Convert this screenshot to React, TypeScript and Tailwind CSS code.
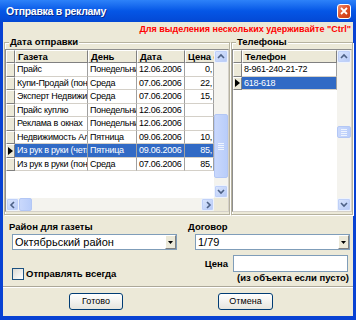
import React from "react";

const rows: [string, string, string, string][] = [
  ["Прайс", "Понедельник", "12.06.2006", "0,"],
  ["Купи-Продай (понедельник)", "Среда", "07.06.2006", "22,"],
  ["Эксперт Недвижимость", "Среда", "07.06.2006", "15,"],
  ["Прайс куплю", "Понедельник", "12.06.2006", ""],
  ["Реклама в окнах", "Понедельник", "12.06.2006", ""],
  ["Недвижимость Алтая", "Пятница", "09.06.2006", "10,"],
  ["Из рук в руки (четверг)", "Пятница", "09.06.2006", "85,"],
  ["Из рук в руки (понедельник)", "Среда", "07.06.2006", "85,"],
];

function Chevron({ dir }: { dir: "up" | "down" | "left" | "right" }) {
  const d =
    dir === "up"
      ? "M1 5 L4 2 L7 5"
      : dir === "down"
      ? "M1 2 L4 5 L7 2"
      : dir === "left"
      ? "M5 1 L2 4 L5 7"
      : "M3 1 L6 4 L3 7";
  return (
    <svg width="8" height="8" viewBox="0 0 8 8">
      <path d={d} fill="none" stroke="#4D6185" strokeWidth="1.6" />
    </svg>
  );
}

function ArrowBtn({ dir }: { dir: "up" | "down" | "left" | "right" }) {
  return (
    <div className="w-full h-full rounded-[2px] border border-[#EEF3FD] bg-gradient-to-br from-[#DCE7FD] to-[#B4C8F6] flex items-center justify-center shadow-[inset_0_0_0_1px_#BFD0F8]">
      <Chevron dir={dir} />
    </div>
  );
}

function Thumb({ grip }: { grip?: boolean }) {
  return (
    <div className="w-full h-full rounded-[2px] border border-[#B3C7F5] bg-gradient-to-r from-[#C9D8FC] to-[#B9CDFA] flex items-center justify-center">
      {grip && (
        <div className="flex flex-col gap-[1px]">
          <div className="w-[6px] h-[1px] bg-[#EEF4FE]" />
          <div className="w-[6px] h-[1px] bg-[#EEF4FE]" />
          <div className="w-[6px] h-[1px] bg-[#EEF4FE]" />
          <div className="w-[6px] h-[1px] bg-[#EEF4FE]" />
        </div>
      )}
    </div>
  );
}

function Indicator({ active }: { active?: boolean }) {
  return (
    <div className="w-[9px] h-full shrink-0 bg-[#ECE9D8] border-t border-l border-t-white border-l-white border-r border-b border-r-[#808080] border-b-[#808080] flex items-center justify-center">
      {active && (
        <svg width="5" height="8" viewBox="0 0 5 8">
          <path d="M0 0 L5 4 L0 8 Z" fill="#000" />
        </svg>
      )}
    </div>
  );
}

function HeaderCell({ w, children }: { w: string; children?: React.ReactNode }) {
  return (
    <div
      className={`${w} h-full shrink-0 bg-[#ECE9D8] border-t border-l border-t-white border-l-white border-r border-b border-r-[#808080] border-b-[#808080] px-[2px] font-bold text-[9.5px] tracking-[-0.1px] leading-[12px] whitespace-nowrap overflow-hidden`}
    >
      {children}
    </div>
  );
}

function Cell({
  w,
  sel,
  right,
  children,
}: {
  w: string;
  sel?: boolean;
  right?: boolean;
  children?: React.ReactNode;
}) {
  return (
    <div
      className={`${w} h-full shrink-0 border-r border-b border-r-[#A0A0A0] border-b-[#D4D0C8] px-[2px] text-[9px] tracking-[-0.25px] leading-[13px] whitespace-nowrap overflow-hidden ${
        sel ? "bg-[#316AC5] text-white" : "bg-white text-black"
      } ${right ? "text-right pr-[1px]" : ""}`}
    >
      {children}
    </div>
  );
}

function GroupBox({
  label,
  className,
  children,
}: {
  label: string;
  className: string;
  children: React.ReactNode;
}) {
  return (
    <div
      className={`relative border border-[#B6B29F] shadow-[inset_1px_1px_0_#FFFFFF,1px_1px_0_#FFFFFF] ${className}`}
    >
      <div className="absolute -top-[7px] left-[4px] bg-[#ECE9D8] px-[1px] font-bold text-[9.5px] leading-[12px] text-black whitespace-nowrap">
        {label}
      </div>
      {children}
    </div>
  );
}

export default function App() {
  return (
    <div className="w-[356px] h-[320px] flex flex-col bg-[#0842D3] font-['Liberation_Sans',Arial,sans-serif] text-black overflow-hidden">
      {/* title bar */}
      <div className="h-[22px] shrink-0 flex items-center justify-between pl-[6px] pr-[5px] bg-gradient-to-b from-[#2D82F9] via-[#0556E6] to-[#0448D4]">
        <span className="text-white font-bold text-[10.5px] tracking-[-0.3px] leading-[14px] [text-shadow:1px_1px_0_#0A2A8A]">
          Отправка в рекламу
        </span>
        <div className="w-[14px] h-[15px] rounded-[3px] border border-white bg-gradient-to-br from-[#EE8A6A] via-[#DF4F26] to-[#C83A12] flex items-center justify-center">
          <svg width="8" height="8" viewBox="0 0 8 8">
            <path d="M1 1 L7 7 M7 1 L1 7" stroke="#fff" strokeWidth="1.8" />
          </svg>
        </div>
      </div>

      {/* body */}
      <div className="flex-1 mx-[3px] mb-[4px] bg-[#ECE9D8] flex flex-col">
        {/* hint */}
        <div className="h-[20px] shrink-0 flex justify-end items-start pt-[1px] pr-[2px]">
          <span className="text-[#FF0000] font-bold text-[9px] leading-[12px] whitespace-nowrap">
            Для выделения нескольких удерживайте "Ctrl"
          </span>
        </div>

        {/* group boxes */}
        <div className="h-[174px] shrink-0 flex">
          <GroupBox label="Дата отправки" className="ml-[1px] w-[226px] h-[173px] pt-[6px] pb-[2px]">
            <div className="h-full flex border border-[#8E8E8E] border-r-[#D4D0C8] border-b-[#D4D0C8] bg-white">
              {/* cell area */}
              <div className="flex-1 flex flex-col min-w-0">
                <div className="h-[13px] shrink-0 flex overflow-hidden">
                  <HeaderCell w="w-[9px] px-0">{""}</HeaderCell>
                  <HeaderCell w="w-[73px]">Газета</HeaderCell>
                  <HeaderCell w="w-[49px]">День</HeaderCell>
                  <HeaderCell w="w-[48px]">Дата</HeaderCell>
                  <HeaderCell w="w-[40px]">Цена с НДС</HeaderCell>
                </div>
                {rows.map((r, i) => {
                  const sel = i === 6;
                  return (
                    <div key={i} className="h-[13.5px] shrink-0 flex overflow-hidden">
                      <Indicator active={sel} />
                      <Cell w="w-[73px]" sel={sel}>
                        {r[0]}
                      </Cell>
                      <Cell w="w-[49px]" sel={sel}>
                        {r[1]}
                      </Cell>
                      <Cell w="w-[48px]" sel={sel}>
                        {r[2]}
                      </Cell>
                      <Cell w="w-[29px]" sel={sel} right>
                        {r[3]}
                      </Cell>
                    </div>
                  );
                })}
                <div className="flex-1 bg-white" />
                {/* horizontal scrollbar */}
                <div className="h-[13px] shrink-0 flex bg-[#F4F3EE]">
                  <div className="w-[13px] h-full">
                    <ArrowBtn dir="left" />
                  </div>
                  <div className="w-[13px] h-full">
                    <Thumb />
                  </div>
                  <div className="flex-1" />
                  <div className="w-[13px] h-full">
                    <ArrowBtn dir="right" />
                  </div>
                </div>
              </div>
              {/* vertical scrollbar */}
              <div className="w-[14px] shrink-0 flex flex-col">
                <div className="flex-1 flex flex-col bg-[#F4F3EE]">
                  <div className="h-[13px] shrink-0">
                    <ArrowBtn dir="up" />
                  </div>
                  <div className="h-[51px] shrink-0" />
                  <div className="h-[64px] shrink-0">
                    <Thumb grip />
                  </div>
                  <div className="flex-1" />
                  <div className="h-[13px] shrink-0">
                    <ArrowBtn dir="down" />
                  </div>
                </div>
                <div className="h-[13px] shrink-0 bg-[#ECE9D8]" />
              </div>
            </div>
          </GroupBox>

          <GroupBox label="Телефоны" className="ml-[1px] w-[122px] h-[173px] pt-[6px] pb-[2px]">
            <div className="h-full flex border border-[#8E8E8E] border-r-[#D4D0C8] border-b-[#D4D0C8] bg-white">
              <div className="flex-1 flex flex-col min-w-0">
                <div className="h-[13px] shrink-0 flex">
                  <HeaderCell w="w-[9px] px-0">{""}</HeaderCell>
                  <HeaderCell w="flex-1">Телефон</HeaderCell>
                </div>
                <div className="h-[13.5px] shrink-0 flex">
                  <Indicator />
                  <Cell w="flex-1">8-961-240-21-72</Cell>
                </div>
                <div className="h-[13.5px] shrink-0 flex">
                  <Indicator active />
                  <Cell w="flex-1" sel>
                    618-618
                  </Cell>
                </div>
                <div className="flex-1 bg-white" />
              </div>
              <div className="w-[14px] shrink-0 flex flex-col bg-[#F4F3EE]">
                <div className="h-[13px] shrink-0">
                  <ArrowBtn dir="up" />
                </div>
                <div className="h-[63px] shrink-0" />
                <div className="h-[12px] shrink-0">
                  <Thumb grip />
                </div>
                <div className="flex-1" />
                <div className="h-[13px] shrink-0">
                  <ArrowBtn dir="down" />
                </div>
              </div>
            </div>
          </GroupBox>
        </div>

        {/* bottom form */}
        <div className="h-[70px] shrink-0 flex">
          <div className="w-[175px] shrink-0 flex flex-col pl-[6px] pt-[5px]">
            <div className="font-bold text-[9.5px] leading-[12px]">Район для газеты</div>
            <div className="mt-[1px] ml-[3px] w-[165px] h-[16px] flex border border-[#7F9DB9] bg-white">
              <div className="flex-1 pl-[2px] text-[11px] leading-[14px]">Октябрьский район</div>
              <div className="w-[11px] h-full bg-[#ECE9D8] border-t border-l border-t-white border-l-white border-r border-b border-r-[#808080] border-b-[#808080] flex items-center justify-center">
                <svg width="5" height="3" viewBox="0 0 5 3">
                  <path d="M0 0 L5 0 L2.5 3 Z" fill="#000" />
                </svg>
              </div>
            </div>
            <div className="mt-[18px] ml-[3px] flex items-center">
              <div className="w-[12px] h-[12px] border border-[#1C5180] bg-gradient-to-br from-[#DCDBD5] to-white" />
              <span className="ml-[2px] font-bold text-[9.5px] leading-[12px]">Отправлять всегда</span>
            </div>
          </div>
          <div className="flex-1 flex flex-col pt-[5px]">
            <div className="pl-[10px] font-bold text-[9.5px] leading-[12px]">Договор</div>
            <div className="mt-[1px] ml-[17px] w-[155px] h-[16px] flex border border-[#7F9DB9] bg-white">
              <div className="flex-1 pl-[2px] text-[11px] leading-[14px]">1/79</div>
              <div className="w-[11px] h-full bg-[#ECE9D8] border-t border-l border-t-white border-l-white border-r border-b border-r-[#808080] border-b-[#808080] flex items-center justify-center">
                <svg width="5" height="3" viewBox="0 0 5 3">
                  <path d="M0 0 L5 0 L2.5 3 Z" fill="#000" />
                </svg>
              </div>
            </div>
            <div className="mt-[5px] flex items-center">
              <div className="w-[50px] text-right font-bold text-[9.5px] leading-[12px]">Цена</div>
              <div className="ml-[5px] w-[115px] h-[17px] border border-[#7F9DB9] bg-white" />
            </div>
            <div className="ml-[59px] font-bold text-[9.5px] leading-[11px] whitespace-nowrap">
              (из объекта если пусто)
            </div>
          </div>
        </div>

        {/* separator */}
        <div className="h-[2px] shrink-0 border-t border-t-[#ACA899] border-b border-b-white" />

        {/* buttons */}
        <div className="flex-1 flex items-start pt-[5px]">
          <button className="ml-[66px] w-[54px] h-[17px] rounded-[3px] border border-[#003C74] bg-gradient-to-b from-white to-[#E6E5DE] text-[9px] leading-[15px] text-black">
            Готово
          </button>
          <button className="ml-[95px] w-[55px] h-[17px] rounded-[3px] border border-[#003C74] bg-gradient-to-b from-white to-[#E6E5DE] text-[9px] leading-[15px] text-black">
            Отмена
          </button>
        </div>
      </div>
    </div>
  );
}
